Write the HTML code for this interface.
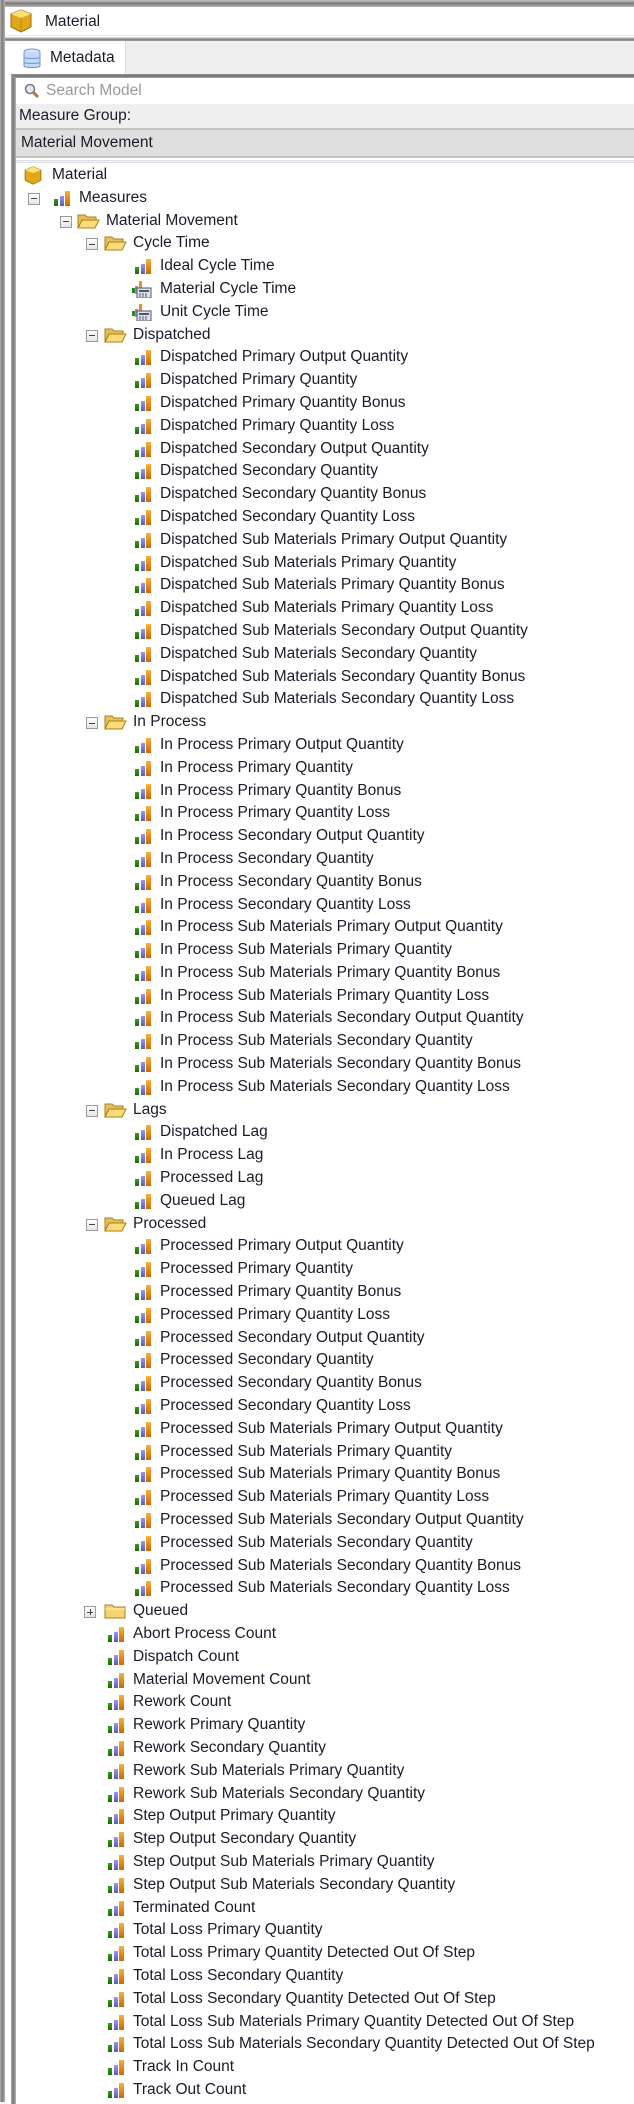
<!DOCTYPE html>
<html><head><meta charset="utf-8">
<style>
*{margin:0;padding:0;box-sizing:border-box}
body{width:634px;height:2102px;background:#fff;font-family:Tahoma,"Liberation Sans","DejaVu Sans",sans-serif;font-size:15.5px;color:#1b1b2a;position:relative;overflow:hidden}
.frameL{position:absolute;left:0;top:0;width:5px;height:2102px;background:linear-gradient(90deg,#b8b8b8,#7c7c7c 40%,#b0b0b0)}
.top{position:absolute;left:0;top:0;width:634px;height:7px;background:linear-gradient(#c8c8c8,#7a7a7a 50%,#b8b8b8)}
.title{position:absolute;left:5px;top:7px;right:0;height:29px;background:#fff}
.title span{position:absolute;left:40px;top:6px}
.sep1{position:absolute;left:0;top:35px;width:634px;height:6px;background:linear-gradient(#e6e6e6,#fff 30%,#b5b5b5 50%,#7b7b7b 80%,#aaa)}
.tabrow{position:absolute;left:5px;top:41px;right:0;height:33px;background:#eeeeee}
.tab{position:absolute;left:5px;top:41px;width:121px;height:34px;background:#fff;border-right:1px solid #ddd}
.tab span{position:absolute;left:45px;top:8px}
.panelTop{position:absolute;left:13px;top:74px;right:0;height:4px;background:linear-gradient(#999,#6e6e6e 50%,#aaa)}
.panelL{position:absolute;left:11px;top:74px;width:5px;height:2030px;background:linear-gradient(90deg,#aaa,#777 50%,#bbb)}
.search{position:absolute;left:16px;top:78px;right:0;height:26px;background:#fff;color:#999}
.search span{position:absolute;left:30px;top:4px}
.mg{position:absolute;left:16px;top:104px;right:0;height:24px;background:#efefef}
.mg span{position:absolute;left:3px;top:3px}
.dd{position:absolute;left:16px;top:128px;right:0;height:30px;background:#dfdfdf;border-top:2px solid #c4c4c4;border-bottom:2px solid #c4c4c4}
.dd span{position:absolute;left:5px;top:4px}
.sep2{position:absolute;left:16px;top:160px;right:0;height:3px;background:linear-gradient(#c9cdd6,#fff,#c9cdd6)}
.tree{position:absolute;left:0;top:164px;width:634px}
.r{height:22.8px;line-height:22.8px;position:relative;white-space:nowrap}
.r .t{position:absolute;top:0}
.ex{position:absolute;top:6px;width:12px;height:12px;border:1px solid #9a9a9a;background:linear-gradient(#fff,#e4e4e4);}
.ex:before{content:"";position:absolute;left:2px;top:4.5px;width:6px;height:1px;background:#444}
.ex.p:after{content:"";position:absolute;left:4.5px;top:2px;width:1px;height:6px;background:#444}
.bar{position:absolute;top:4px;width:16px;height:15px;background:
linear-gradient(#3a9a1a,#1d6a08) 0 100%/4px 7px no-repeat,
linear-gradient(#9a9ae8,#5a5ac0) 6px 100%/4px 10px no-repeat,
linear-gradient(#f8b040,#c86a00) 11px 100%/5px 15px no-repeat}
.calc{position:absolute;top:3px;width:20px;height:17px}
.fold{position:absolute;top:3px;width:23px;height:16px}
</style></head><body>
<div class="top"></div>
<div class="title">
<svg style="position:absolute;left:5px;top:2px" width="22" height="24" viewBox="0 0 22 24"><path d="M11 1L21 5V18L11 23L1 18V5Z" fill="#e0a818" stroke="#9a6a08"/><path d="M1 5L11 9L21 5L11 1Z" fill="#fde27a"/><path d="M11 9V23" stroke="#b8860b"/></svg>
<span>Material</span></div>
<div class="sep1"></div>
<div class="tabrow"></div>
<div class="tab"><svg style="position:absolute;left:17px;top:7px" width="20" height="22" viewBox="0 0 20 22"><ellipse cx="10" cy="4" rx="8" ry="3" fill="#dbe8fb" stroke="#6f95d6"/><path d="M2 4V18C2 20 18 20 18 18V4" fill="#c4d8f7" stroke="#6f95d6"/><path d="M2 9C2 11 18 11 18 9M2 14C2 16 18 16 18 14" fill="none" stroke="#6f95d6"/></svg><span>Metadata</span></div>
<div class="panelL"></div>
<div class="panelTop"></div>
<div class="search"><svg style="position:absolute;left:8px;top:5px" width="16" height="16" viewBox="0 0 16 16"><circle cx="6" cy="6" r="4.5" fill="#dfe9f5" stroke="#777" stroke-width="1.5"/><path d="M9 9L14 14" stroke="#b8743a" stroke-width="3"/></svg><span>Search Model</span></div>
<div class="mg"><span>Measure Group:</span></div>
<div class="dd"><span>Material Movement</span></div>
<div class="sep2"></div>
<svg width="0" height="0" style="position:absolute"><defs>
<symbol id="fo" viewBox="0 0 23 16"><path d="M1 2H8L10 4H19V7H5L1 15Z" fill="#e8c05a" stroke="#a8801a"/><path d="M5 7H22L18 15H1Z" fill="#fbdb7c" stroke="#a8801a"/></symbol>
<symbol id="fc" viewBox="0 0 23 16"><path d="M1 2H8L10 4H21V15H1Z" fill="#f5d272" stroke="#a8801a"/><path d="M1 6H21" stroke="#fff3c0"/></symbol>
<symbol id="ca" viewBox="0 0 20 17"><rect x="0" y="7" width="3" height="5" fill="#2a8a10"/><rect x="3" y="5" width="3" height="8" fill="#8a8ae0"/><rect x="7" y="0" width="3" height="9" fill="#e89020"/><rect x="5" y="7" width="14" height="10" fill="#dce4f0" stroke="#556"/><rect x="7" y="9" width="10" height="2" fill="#556"/><path d="M7 13h2M10 13h2M13 13h2M7 15h2M10 15h2M13 15h2" stroke="#556"/></symbol>
</defs></svg>
<div class="tree">
<div class="r"><svg style="position:absolute;left:24px;top:2px" width="18" height="19" viewBox="0 0 22 24"><path d="M11 1L21 5V18L11 23L1 18V5Z" fill="#e0a818" stroke="#9a6a08"/><path d="M1 5L11 9L21 5L11 1Z" fill="#fde27a"/></svg><span class="t" style="left:52px">Material</span></div>
<div class="r"><i class="ex" style="left:28px"></i><i class="bar" style="left:54px"></i><span class="t" style="left:79px">Measures</span></div>
<div class="r"><i class="ex" style="left:60px"></i><svg class="fold" style="left:77px"><use href="#fo"/></svg><span class="t" style="left:106px">Material Movement</span></div>
<div class="r"><i class="ex" style="left:86px"></i><svg class="fold" style="left:104px"><use href="#fo"/></svg><span class="t" style="left:133px">Cycle Time</span></div>
<div class="r"><i class="bar" style="left:135px"></i><span class="t" style="left:160px">Ideal Cycle Time</span></div>
<div class="r"><svg class="calc" style="left:132px"><use href="#ca"/></svg><span class="t" style="left:160px">Material Cycle Time</span></div>
<div class="r"><svg class="calc" style="left:132px"><use href="#ca"/></svg><span class="t" style="left:160px">Unit Cycle Time</span></div>
<div class="r"><i class="ex" style="left:86px"></i><svg class="fold" style="left:104px"><use href="#fo"/></svg><span class="t" style="left:133px">Dispatched</span></div>
<div class="r"><i class="bar" style="left:135px"></i><span class="t" style="left:160px">Dispatched Primary Output Quantity</span></div>
<div class="r"><i class="bar" style="left:135px"></i><span class="t" style="left:160px">Dispatched Primary Quantity</span></div>
<div class="r"><i class="bar" style="left:135px"></i><span class="t" style="left:160px">Dispatched Primary Quantity Bonus</span></div>
<div class="r"><i class="bar" style="left:135px"></i><span class="t" style="left:160px">Dispatched Primary Quantity Loss</span></div>
<div class="r"><i class="bar" style="left:135px"></i><span class="t" style="left:160px">Dispatched Secondary Output Quantity</span></div>
<div class="r"><i class="bar" style="left:135px"></i><span class="t" style="left:160px">Dispatched Secondary Quantity</span></div>
<div class="r"><i class="bar" style="left:135px"></i><span class="t" style="left:160px">Dispatched Secondary Quantity Bonus</span></div>
<div class="r"><i class="bar" style="left:135px"></i><span class="t" style="left:160px">Dispatched Secondary Quantity Loss</span></div>
<div class="r"><i class="bar" style="left:135px"></i><span class="t" style="left:160px">Dispatched Sub Materials Primary Output Quantity</span></div>
<div class="r"><i class="bar" style="left:135px"></i><span class="t" style="left:160px">Dispatched Sub Materials Primary Quantity</span></div>
<div class="r"><i class="bar" style="left:135px"></i><span class="t" style="left:160px">Dispatched Sub Materials Primary Quantity Bonus</span></div>
<div class="r"><i class="bar" style="left:135px"></i><span class="t" style="left:160px">Dispatched Sub Materials Primary Quantity Loss</span></div>
<div class="r"><i class="bar" style="left:135px"></i><span class="t" style="left:160px">Dispatched Sub Materials Secondary Output Quantity</span></div>
<div class="r"><i class="bar" style="left:135px"></i><span class="t" style="left:160px">Dispatched Sub Materials Secondary Quantity</span></div>
<div class="r"><i class="bar" style="left:135px"></i><span class="t" style="left:160px">Dispatched Sub Materials Secondary Quantity Bonus</span></div>
<div class="r"><i class="bar" style="left:135px"></i><span class="t" style="left:160px">Dispatched Sub Materials Secondary Quantity Loss</span></div>
<div class="r"><i class="ex" style="left:86px"></i><svg class="fold" style="left:104px"><use href="#fo"/></svg><span class="t" style="left:133px">In Process</span></div>
<div class="r"><i class="bar" style="left:135px"></i><span class="t" style="left:160px">In Process Primary Output Quantity</span></div>
<div class="r"><i class="bar" style="left:135px"></i><span class="t" style="left:160px">In Process Primary Quantity</span></div>
<div class="r"><i class="bar" style="left:135px"></i><span class="t" style="left:160px">In Process Primary Quantity Bonus</span></div>
<div class="r"><i class="bar" style="left:135px"></i><span class="t" style="left:160px">In Process Primary Quantity Loss</span></div>
<div class="r"><i class="bar" style="left:135px"></i><span class="t" style="left:160px">In Process Secondary Output Quantity</span></div>
<div class="r"><i class="bar" style="left:135px"></i><span class="t" style="left:160px">In Process Secondary Quantity</span></div>
<div class="r"><i class="bar" style="left:135px"></i><span class="t" style="left:160px">In Process Secondary Quantity Bonus</span></div>
<div class="r"><i class="bar" style="left:135px"></i><span class="t" style="left:160px">In Process Secondary Quantity Loss</span></div>
<div class="r"><i class="bar" style="left:135px"></i><span class="t" style="left:160px">In Process Sub Materials Primary Output Quantity</span></div>
<div class="r"><i class="bar" style="left:135px"></i><span class="t" style="left:160px">In Process Sub Materials Primary Quantity</span></div>
<div class="r"><i class="bar" style="left:135px"></i><span class="t" style="left:160px">In Process Sub Materials Primary Quantity Bonus</span></div>
<div class="r"><i class="bar" style="left:135px"></i><span class="t" style="left:160px">In Process Sub Materials Primary Quantity Loss</span></div>
<div class="r"><i class="bar" style="left:135px"></i><span class="t" style="left:160px">In Process Sub Materials Secondary Output Quantity</span></div>
<div class="r"><i class="bar" style="left:135px"></i><span class="t" style="left:160px">In Process Sub Materials Secondary Quantity</span></div>
<div class="r"><i class="bar" style="left:135px"></i><span class="t" style="left:160px">In Process Sub Materials Secondary Quantity Bonus</span></div>
<div class="r"><i class="bar" style="left:135px"></i><span class="t" style="left:160px">In Process Sub Materials Secondary Quantity Loss</span></div>
<div class="r"><i class="ex" style="left:86px"></i><svg class="fold" style="left:104px"><use href="#fo"/></svg><span class="t" style="left:133px">Lags</span></div>
<div class="r"><i class="bar" style="left:135px"></i><span class="t" style="left:160px">Dispatched Lag</span></div>
<div class="r"><i class="bar" style="left:135px"></i><span class="t" style="left:160px">In Process Lag</span></div>
<div class="r"><i class="bar" style="left:135px"></i><span class="t" style="left:160px">Processed Lag</span></div>
<div class="r"><i class="bar" style="left:135px"></i><span class="t" style="left:160px">Queued Lag</span></div>
<div class="r"><i class="ex" style="left:86px"></i><svg class="fold" style="left:104px"><use href="#fo"/></svg><span class="t" style="left:133px">Processed</span></div>
<div class="r"><i class="bar" style="left:135px"></i><span class="t" style="left:160px">Processed Primary Output Quantity</span></div>
<div class="r"><i class="bar" style="left:135px"></i><span class="t" style="left:160px">Processed Primary Quantity</span></div>
<div class="r"><i class="bar" style="left:135px"></i><span class="t" style="left:160px">Processed Primary Quantity Bonus</span></div>
<div class="r"><i class="bar" style="left:135px"></i><span class="t" style="left:160px">Processed Primary Quantity Loss</span></div>
<div class="r"><i class="bar" style="left:135px"></i><span class="t" style="left:160px">Processed Secondary Output Quantity</span></div>
<div class="r"><i class="bar" style="left:135px"></i><span class="t" style="left:160px">Processed Secondary Quantity</span></div>
<div class="r"><i class="bar" style="left:135px"></i><span class="t" style="left:160px">Processed Secondary Quantity Bonus</span></div>
<div class="r"><i class="bar" style="left:135px"></i><span class="t" style="left:160px">Processed Secondary Quantity Loss</span></div>
<div class="r"><i class="bar" style="left:135px"></i><span class="t" style="left:160px">Processed Sub Materials Primary Output Quantity</span></div>
<div class="r"><i class="bar" style="left:135px"></i><span class="t" style="left:160px">Processed Sub Materials Primary Quantity</span></div>
<div class="r"><i class="bar" style="left:135px"></i><span class="t" style="left:160px">Processed Sub Materials Primary Quantity Bonus</span></div>
<div class="r"><i class="bar" style="left:135px"></i><span class="t" style="left:160px">Processed Sub Materials Primary Quantity Loss</span></div>
<div class="r"><i class="bar" style="left:135px"></i><span class="t" style="left:160px">Processed Sub Materials Secondary Output Quantity</span></div>
<div class="r"><i class="bar" style="left:135px"></i><span class="t" style="left:160px">Processed Sub Materials Secondary Quantity</span></div>
<div class="r"><i class="bar" style="left:135px"></i><span class="t" style="left:160px">Processed Sub Materials Secondary Quantity Bonus</span></div>
<div class="r"><i class="bar" style="left:135px"></i><span class="t" style="left:160px">Processed Sub Materials Secondary Quantity Loss</span></div>
<div class="r"><i class="ex p" style="left:84px"></i><svg class="fold" style="left:104px"><use href="#fc"/></svg><span class="t" style="left:133px">Queued</span></div>
<div class="r"><i class="bar" style="left:108px"></i><span class="t" style="left:133px">Abort Process Count</span></div>
<div class="r"><i class="bar" style="left:108px"></i><span class="t" style="left:133px">Dispatch Count</span></div>
<div class="r"><i class="bar" style="left:108px"></i><span class="t" style="left:133px">Material Movement Count</span></div>
<div class="r"><i class="bar" style="left:108px"></i><span class="t" style="left:133px">Rework Count</span></div>
<div class="r"><i class="bar" style="left:108px"></i><span class="t" style="left:133px">Rework Primary Quantity</span></div>
<div class="r"><i class="bar" style="left:108px"></i><span class="t" style="left:133px">Rework Secondary Quantity</span></div>
<div class="r"><i class="bar" style="left:108px"></i><span class="t" style="left:133px">Rework Sub Materials Primary Quantity</span></div>
<div class="r"><i class="bar" style="left:108px"></i><span class="t" style="left:133px">Rework Sub Materials Secondary Quantity</span></div>
<div class="r"><i class="bar" style="left:108px"></i><span class="t" style="left:133px">Step Output Primary Quantity</span></div>
<div class="r"><i class="bar" style="left:108px"></i><span class="t" style="left:133px">Step Output Secondary Quantity</span></div>
<div class="r"><i class="bar" style="left:108px"></i><span class="t" style="left:133px">Step Output Sub Materials Primary Quantity</span></div>
<div class="r"><i class="bar" style="left:108px"></i><span class="t" style="left:133px">Step Output Sub Materials Secondary Quantity</span></div>
<div class="r"><i class="bar" style="left:108px"></i><span class="t" style="left:133px">Terminated Count</span></div>
<div class="r"><i class="bar" style="left:108px"></i><span class="t" style="left:133px">Total Loss Primary Quantity</span></div>
<div class="r"><i class="bar" style="left:108px"></i><span class="t" style="left:133px">Total Loss Primary Quantity Detected Out Of Step</span></div>
<div class="r"><i class="bar" style="left:108px"></i><span class="t" style="left:133px">Total Loss Secondary Quantity</span></div>
<div class="r"><i class="bar" style="left:108px"></i><span class="t" style="left:133px">Total Loss Secondary Quantity Detected Out Of Step</span></div>
<div class="r"><i class="bar" style="left:108px"></i><span class="t" style="left:133px">Total Loss Sub Materials Primary Quantity Detected Out Of Step</span></div>
<div class="r"><i class="bar" style="left:108px"></i><span class="t" style="left:133px">Total Loss Sub Materials Secondary Quantity Detected Out Of Step</span></div>
<div class="r"><i class="bar" style="left:108px"></i><span class="t" style="left:133px">Track In Count</span></div>
<div class="r"><i class="bar" style="left:108px"></i><span class="t" style="left:133px">Track Out Count</span></div>
</div>
<div class="frameL"></div>
</body></html>
